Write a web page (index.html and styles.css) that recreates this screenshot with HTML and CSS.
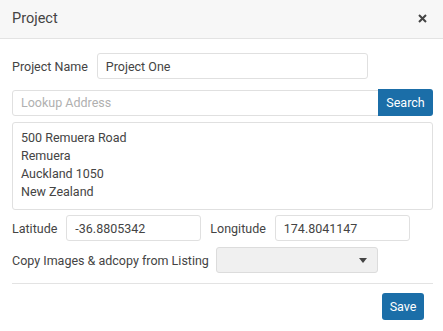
FILE: index.html
```html
<!DOCTYPE html>
<html>
<head>
<meta charset="utf-8">
<link rel="stylesheet" href="styles.css">
</head>
<body>
<div class="modal">
  <div class="modal-header">
    <span class="modal-title">Project</span>
    <svg class="close" width="9" height="9" viewBox="0 0 9 9"><path d="M1 1L8 8M8 1L1 8" stroke="#444" stroke-width="2" stroke-linecap="butt"/></svg>
  </div>
  <div class="modal-body">
    <div class="row row-name">
      <label class="label">Project Name</label>
      <input class="input input-name" type="text" value="Project One">
    </div>
    <div class="row row-lookup">
      <input class="input input-lookup" type="text" placeholder="Lookup Address">
      <button class="btn btn-search">Search</button>
    </div>
    <textarea class="textarea">500 Remuera Road
Remuera
Auckland 1050
New Zealand</textarea>
    <div class="row row-coords">
      <label class="label">Latitude</label>
      <input class="input input-coord" type="text" value="-36.8805342">
      <label class="label label-long">Longitude</label>
      <input class="input input-coord" type="text" value="174.8041147">
    </div>
    <div class="row row-copy">
      <label class="label">Copy Images &amp; adcopy from Listing</label>
      <div class="select"><span class="caret"></span></div>
    </div>
    <div class="divider"></div>
    <div class="footer">
      <button class="btn btn-save">Save</button>
    </div>
  </div>
</div>
</body>
</html>
```

FILE: styles.css
```css
* { box-sizing: border-box; }
html, body { margin: 0; padding: 0; background: #fff; }
body {
  font-family: Roboto, "Noto Sans", sans-serif;
  font-size: 12.5px;
  color: #444;
  width: 443px;
}
.modal { width: 443px; }
.modal-header {
  height: 39px;
  background: #f7f7f7;
  border-bottom: 1px solid #e3e3e3;
  display: flex;
  align-items: center;
  justify-content: space-between;
  padding: 0 16px 0 12px;
}
.modal-title { font-size: 14.5px; color: #444; padding-bottom: 1px; }
.close { display: block; margin-bottom: 1px; }
.modal-body { padding: 14px 10px 0 12px; }
.row { display: flex; align-items: center; }
.label { color: #444; white-space: nowrap; }
.input {
  height: 26px;
  border: 1px solid #e0e0e0;
  border-radius: 3px;
  padding: 0 8px;
  font-family: Roboto, "Noto Sans", sans-serif;
  font-size: 12.5px;
  color: #444;
  background: #fff;
  outline: none;
}
.input::placeholder { color: #b0b0b0; }
.row-name .label { margin-right: 9px; }
.input-name { width: 271px; }
.row-lookup { margin-top: 10px; }
.input-lookup { width: 367px; border-radius: 3px 0 0 3px; }
.btn {
  border: none;
  background: #1b6ea8;
  color: #fff;
  font-family: Roboto, "Noto Sans", sans-serif;
  font-size: 12.5px;
  padding: 0;
  cursor: pointer;
}
.btn-search { width: 55px; height: 27px; border-radius: 0 3px 3px 0; margin-left: -1px; }
.textarea {
  display: block;
  margin-top: 6px;
  width: 421px;
  height: 88px;
  border: 1px solid #e0e0e0;
  border-radius: 3px;
  padding: 6px 8px;
  font-family: Roboto, "Noto Sans", sans-serif;
  font-size: 12.5px;
  line-height: 18px;
  color: #444;
  resize: none;
  outline: none;
}
.row-coords { margin-top: 5px; }
.row-coords .label { margin-right: 9px; }
.input-coord { width: 135px; }
.row-coords .label-long { margin-left: 9px; }
.row-copy { margin-top: 6px; }
.row-copy .label { margin-right: 7px; }
.select {
  position: relative;
  width: 162px;
  height: 26px;
  background: #f0f0f0;
  border: 1px solid #dcdcdc;
  border-radius: 3px;
}
.caret {
  position: absolute;
  right: 10px;
  top: 10px;
  width: 0;
  height: 0;
  border-left: 4px solid transparent;
  border-right: 4px solid transparent;
  border-top: 5px solid #444;
}
.divider { margin-top: 10px; width: 421px; height: 1px; background: #e3e3e3; }
.footer { display: flex; justify-content: flex-end; padding: 9px 9px 0 0; }
.btn-save { width: 42px; height: 27px; border-radius: 3px; }
```
